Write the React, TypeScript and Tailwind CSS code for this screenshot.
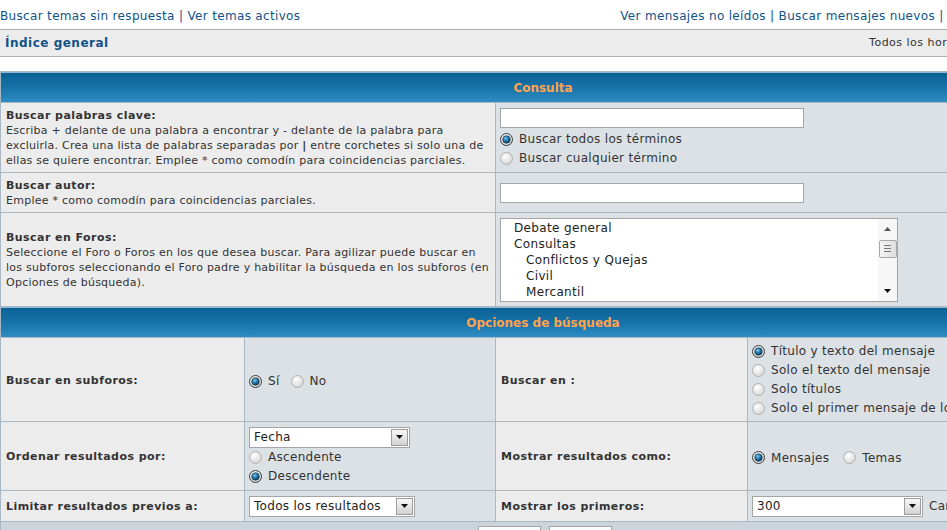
import React from "react";

const Radio = ({ on = false }: { on?: boolean }) => (
  <svg width="13" height="13" viewBox="0 0 13 13" className="shrink-0">
    <defs>
      <radialGradient id="rbg" cx="40%" cy="35%" r="70%">
        <stop offset="0%" stopColor="#ffffff" />
        <stop offset="100%" stopColor="#d4d4d4" />
      </radialGradient>
      <radialGradient id="rdot" cx="40%" cy="35%" r="70%">
        <stop offset="0%" stopColor="#7cc6ec" />
        <stop offset="55%" stopColor="#1a6fa3" />
        <stop offset="100%" stopColor="#053a5c" />
      </radialGradient>
    </defs>
    <circle cx="6.5" cy="6.5" r="6" fill="url(#rbg)" stroke={on ? "#3a3a3a" : "#b0b0b0"} />
    {on && <circle cx="6.5" cy="6.5" r="3.8" fill="url(#rdot)" stroke="#1c2a33" strokeWidth="0.6" />}
  </svg>
);

const Caret = ({ up = false }: { up?: boolean }) => (
  <svg width="7" height="4" viewBox="0 0 7 4">
    <path d={up ? "M0 4h7L3.5 0z" : "M0 0h7L3.5 4z"} fill={up ? "#555" : "#111"} />
  </svg>
);

const Select = ({ value, width }: { value: string; width: string }) => (
  <div className={`flex h-[21px] shrink-0 items-center border border-[#a5a5a5] bg-white ${width}`}>
    <span className="flex-1 pl-[4px] text-[12px] leading-none tracking-[0.3px] text-[#222]">{value}</span>
    <span className="mr-px flex h-[17px] w-[17px] items-center justify-center border border-[#9c9c9c] bg-gradient-to-b from-[#f8f8f8] to-[#d2d2d2]">
      <Caret />
    </span>
  </div>
);

const RadioLine = ({ on, label }: { on?: boolean; label: string }) => (
  <div className="flex h-[19px] items-center gap-[6px] text-[12px] tracking-[0.3px] text-[#333]">
    <Radio on={on} />
    <span className="whitespace-nowrap">{label}</span>
  </div>
);

const Header = ({ title }: { title: string }) => (
  <div className="flex h-[30px] items-center justify-center border-t border-[#8fb8d3] bg-gradient-to-b from-[#0b6195] via-[#1772a8] to-[#2d8dc4] text-[12px] font-bold text-[#ffa34f]">
    {title}
  </div>
);

const App = () => {
  return (
    <div className="h-[530px] w-[947px] overflow-hidden bg-white font-['DejaVu_Sans',Verdana,sans-serif] text-[#333]">
      <div className="w-[1086px]">
        {/* top links */}
        <div className="flex h-[29px] items-center justify-between pt-[3px] pr-[30px] text-[12px] tracking-[0.33px] text-[#105289]">
          <span>Buscar temas sin respuesta | Ver temas activos</span>
          <span>Ver mensajes no leídos | Buscar mensajes nuevos | Ver tus mensajes</span>
        </div>

        {/* breadcrumbs */}
        <div className="flex h-[28px] items-center justify-between border-y border-[#a9b3ba] bg-[#ececec] pl-[5px] pr-[1px]">
          <span className="text-[12px] font-bold tracking-[0.5px] text-[#105289]">Índice general</span>
          <span className="text-[11px] tracking-[0.5px] text-[#333]">Todos los horarios son UTC + 1 hora</span>
        </div>

        <div className="h-[14px]" />

        {/* search table */}
        <div className="flex flex-col gap-px bg-[#a9b8c2] p-px">
          <Header title="Consulta" />

          <div className="flex h-[69px] gap-px">
            <div className="flex w-[494px] shrink-0 flex-col justify-center bg-[#ececec] px-[5px] text-[11px] leading-[15px] tracking-[0.25px]">
              <b className="tracking-[0.45px]">Buscar palabras clave:</b>
              <span className="whitespace-nowrap">
                Escriba + delante de una palabra a encontrar y - delante de la palabra para
                <br />
                excluirla. Crea una lista de palabras separadas por <b>|</b> entre corchetes si solo una de
                <br />
                ellas se quiere encontrar. Emplee * como comodín para coincidencias parciales.
              </span>
            </div>
            <div className="flex flex-1 flex-col justify-center bg-[#dce1e5] pl-[4px]">
              <div className="mb-[2px] h-[20px] w-[304px] border border-[#a5a5a5] bg-white" />
              <RadioLine on label="Buscar todos los términos" />
              <RadioLine label="Buscar cualquier término" />
            </div>
          </div>

          <div className="flex h-[39px] gap-px">
            <div className="flex w-[494px] shrink-0 flex-col justify-center bg-[#ececec] px-[5px] text-[11px] leading-[15px] tracking-[0.25px]">
              <b className="tracking-[0.45px]">Buscar autor:</b>
              <span>Emplee * como comodín para coincidencias parciales.</span>
            </div>
            <div className="flex flex-1 items-center bg-[#dce1e5] pl-[4px]">
              <div className="h-[20px] w-[304px] border border-[#a5a5a5] bg-white" />
            </div>
          </div>

          <div className="flex h-[93px] gap-px">
            <div className="flex w-[494px] shrink-0 flex-col justify-center bg-[#ececec] px-[5px] text-[11px] leading-[15px] tracking-[0.25px]">
              <b className="tracking-[0.45px]">Buscar en Foros:</b>
              <span className="whitespace-nowrap">
                Seleccione el Foro o Foros en los que desea buscar. Para agilizar puede buscar en
                <br />
                los subforos seleccionando el Foro padre y habilitar la búsqueda en los subforos (en
                <br />
                Opciones de búsqueda).
              </span>
            </div>
            <div className="flex flex-1 items-center bg-[#dce1e5] pl-[4px]">
              <div className="flex h-[84px] w-[398px] border border-[#a5a5a5] bg-white">
                <div className="flex-1 overflow-hidden pt-[1px] pl-[13px] text-[12px] leading-[16px] tracking-[0.35px] text-[#222]">
                  <div>Debate general</div>
                  <div>Consultas</div>
                  <div className="pl-[12px]">Conflictos y Quejas</div>
                  <div className="pl-[12px]">Civil</div>
                  <div className="pl-[12px]">Mercantil</div>
                </div>
                <div className="flex w-[19px] flex-col items-center bg-[#f7f7f7]">
                  <div className="flex h-[21px] items-center">
                    <Caret up />
                  </div>
                  <div className="flex h-[18px] w-[18px] flex-col items-center justify-center gap-[2px] rounded-[2px] border border-[#a8a8a8] bg-gradient-to-r from-[#f4f4f4] to-[#dedede]">
                    <span className="h-px w-[7px] bg-[#777]" />
                    <span className="h-px w-[7px] bg-[#777]" />
                    <span className="h-px w-[7px] bg-[#777]" />
                  </div>
                  <div className="flex-1" />
                  <div className="flex h-[20px] items-center">
                    <Caret />
                  </div>
                </div>
              </div>
            </div>
          </div>

          <Header title="Opciones de búsqueda" />

          <div className="flex h-[83px] gap-px text-[11px]">
            <div className="flex w-[243px] shrink-0 items-center bg-[#ececec] px-[5px] pt-[3px] font-bold tracking-[0.45px]">Buscar en subforos:</div>
            <div className="flex w-[250px] shrink-0 items-center gap-[6px] bg-[#dce1e5] pl-[4px] pt-[3px] text-[12px] tracking-[0.3px]">
              <Radio on />
              <span className="mr-[5px]">Sí</span>
              <Radio />
              <span>No</span>
            </div>
            <div className="flex w-[251px] shrink-0 items-center bg-[#ececec] px-[5px] pt-[3px] font-bold tracking-[0.45px]">Buscar en :</div>
            <div className="flex flex-1 flex-col justify-center bg-[#dce1e5] pl-[4px]">
              <RadioLine on label="Título y texto del mensaje" />
              <RadioLine label="Solo el texto del mensaje" />
              <RadioLine label="Solo títulos" />
              <RadioLine label="Solo el primer mensaje de los temas" />
            </div>
          </div>

          <div className="flex h-[68px] gap-px text-[11px]">
            <div className="flex w-[243px] shrink-0 items-center bg-[#ececec] px-[5px] pt-[3px] font-bold tracking-[0.45px]">Ordenar resultados por:</div>
            <div className="flex w-[250px] shrink-0 flex-col justify-center bg-[#dce1e5] pl-[4px]">
              <Select value="Fecha" width="w-[161px]" />
              <RadioLine label="Ascendente" />
              <RadioLine on label="Descendente" />
            </div>
            <div className="flex w-[251px] shrink-0 items-center bg-[#ececec] px-[5px] pt-[3px] font-bold tracking-[0.45px]">Mostrar resultados como:</div>
            <div className="flex flex-1 items-center gap-[6px] bg-[#dce1e5] pl-[4px] pt-[3px] text-[12px] tracking-[0.3px]">
              <Radio on />
              <span className="mr-[8px]">Mensajes</span>
              <Radio />
              <span>Temas</span>
            </div>
          </div>

          <div className="flex h-[30px] gap-px text-[11px]">
            <div className="flex w-[243px] shrink-0 items-center bg-[#ececec] px-[5px] pt-[2px] font-bold tracking-[0.45px]">Limitar resultados previos a:</div>
            <div className="flex w-[250px] shrink-0 items-center bg-[#dce1e5] pl-[4px]">
              <Select value="Todos los resultados" width="w-[166px]" />
            </div>
            <div className="flex w-[251px] shrink-0 items-center bg-[#ececec] px-[5px] pt-[2px] font-bold tracking-[0.45px]">Mostrar los primeros:</div>
            <div className="flex flex-1 items-center gap-[6px] bg-[#dce1e5] pl-[4px] text-[12px] tracking-[0.3px]">
              <Select value="300" width="w-[171px]" />
              <span className="whitespace-nowrap">Caracteres de los mensajes</span>
            </div>
          </div>

          <div className="flex h-[34px] items-start justify-center gap-[8px] bg-[#cbd4db] pt-[4px] pl-[3px]">
            <div className="h-[24px] w-[63px] border border-[#a5a5a5] bg-gradient-to-b from-white to-[#e6e6e6]" />
            <div className="h-[24px] w-[63px] border border-[#a5a5a5] bg-gradient-to-b from-white to-[#e6e6e6]" />
          </div>
        </div>
      </div>
    </div>
  );
};

export default App;
